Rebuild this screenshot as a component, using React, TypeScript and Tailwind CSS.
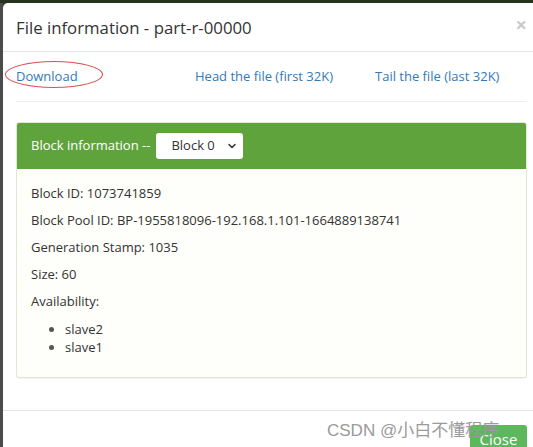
import { ChevronDown } from 'lucide-react';

const font = { fontFamily: '"Open Sans", "Noto Sans", sans-serif' };

export default function App() {
  const lines = [
    'Block ID: 1073741859',
    'Block Pool ID: BP-1955818096-192.168.1.101-1664889138741',
    'Generation Stamp: 1035',
    'Size: 60',
  ];

  return (
    <div
      className="w-[533px] h-[447px] overflow-hidden flex flex-col bg-[#2f3a28]"
      style={font}
    >
      <div className="h-[3px] shrink-0 bg-[#26331e]" />
      <div className="flex flex-1 min-h-0">
        <div className="w-[3px] shrink-0 bg-[#4b4b4b]" />
        <div className="relative w-[537px] shrink-0 bg-white rounded-tl-[5px] flex flex-col text-[#333]">
          {/* header */}
          <div className="h-[49px] shrink-0 flex items-center justify-between pl-[13px] pr-[13px] border-b border-[#e5e5e5]">
            <h4 className="text-[16.8px] leading-[20px] text-[#333] pt-[2px]">File information - part-r-00000</h4>
            <span className="text-[20px] font-bold leading-none text-[#c9c9c9] -mt-[4px]">×</span>
          </div>

          {/* body */}
          <div className="px-[13px] pt-[15px] pb-[14px] border-b border-[#e5e5e5]">
            <div className="relative grid grid-cols-[179px_180px_1fr] text-[13px] leading-[18px] text-[#337ab7]">
              <span>Download</span>
              <span>Head the file (first 32K)</span>
              <span>Tail the file (last 32K)</span>
              <span className="absolute left-[-11px] top-[-6px] w-[98px] h-[27px] rounded-[50%] border border-[#d9534f]" />
            </div>
            <div className="mt-[16px] h-px bg-[#eeeeee]" />

            <div className="mt-[20px] w-[511px] border border-[#dfe8d2] rounded-[3px] bg-[#fefefa] shadow-[0_1px_1px_rgba(0,0,0,0.05)]">
              <div className="h-[46px] bg-[#5fa33d] rounded-t-[2px] flex items-center pl-[14px] gap-[6px] text-white text-[13px]">
                <span>Block information --</span>
                <div className="w-[87px] h-[26px] bg-white rounded-[3px] flex items-center justify-between pl-[15px] pr-[5px] text-[#333]">
                  <span>Block 0</span>
                  <ChevronDown size={12} strokeWidth={3} className="text-[#333]" />
                </div>
              </div>
              <div className="px-[14px] pt-[15px] pb-[12px] text-[13px] leading-[18px]">
                {lines.map((l) => (
                  <p key={l} className="mb-[9px]">{l}</p>
                ))}
                <p className="mb-[10px]">Availability:</p>
                <ul className="list-disc pl-[34px] mb-[9px] marker:text-[#555]">
                  <li>slave2</li>
                  <li>slave1</li>
                </ul>
              </div>
            </div>
            <div className="h-[18px]" />
          </div>

          {/* footer */}
          <div className="relative flex-1 flex justify-end pt-[14px] pr-[13px]">
            <div className="w-[57px] h-[28px] bg-[#5cb85c] rounded-[3px] text-white text-[15px] flex justify-center pt-[3px]">
              Close
            </div>
            <span className="absolute left-[324px] top-[8px] text-[17px] leading-[24px] text-[#9a9a9a] whitespace-nowrap font-['Liberation_Sans','Noto_Sans_CJK_SC',sans-serif]">
              CSDN @小白不懂程序
            </span>
          </div>
        </div>
      </div>
    </div>
  );
}
